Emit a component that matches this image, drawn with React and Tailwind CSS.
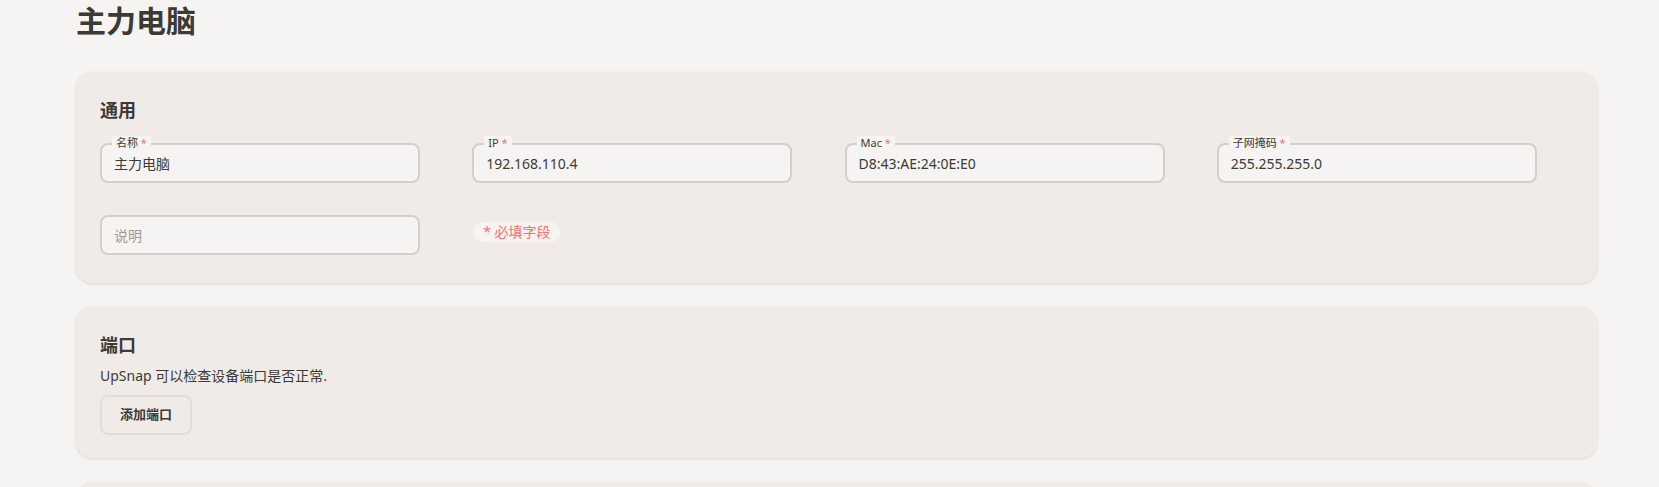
import { useState } from "react";

const FONT = "font-['Noto_Sans','Noto_Sans_CJK_SC',sans-serif]";

const Field = ({ label, value, required, placeholder }) => (
    <div className="relative w-[320px]">
        {label && (
            <span className="absolute left-[12px] -top-[7px] px-[4px] bg-[#f5f4f2] text-[11px] leading-[13px] text-[#3d3934]">
                {label}
                {required && <span className="text-[#f87171]"> *</span>}
            </span>
        )}
        <input
            defaultValue={value}
            placeholder={placeholder}
            className="w-full h-[40px] rounded-lg border-2 border-[#d3d0cb] bg-[#f5f4f2] pl-3 text-[14px] text-[#3d3934] placeholder:text-[#9d9994] outline-none"
        />
    </div>
);

export default function App() {
    const [ports] = useState([]);

    return (
        <div className={`min-h-screen bg-[#f5f4f2] ${FONT} text-[#3d3934]`}>
            <div className="pl-[76px] w-[1597px] pt-[3px]">
                <h1 className="text-[30px] leading-[36px] font-bold text-[#3d3934]">主力电脑</h1>

                {/* --- GENERAL --- */}
                <section className="mt-[33px] bg-[#f0ebe7] rounded-2xl shadow-[0_1px_3px_rgba(0,0,0,0.12)] px-6 pt-6 pb-[28px]">
                    <h2 className="text-[18px] leading-[28px] font-bold">通用</h2>
                    <div className="grid grid-cols-4 gap-x-4 mt-[19px]">
                        <Field label="名称" value="主力电脑" required />
                        <Field label="IP" value="192.168.110.4" required />
                        <Field label="Mac" value="D8:43:AE:24:0E:E0" required />
                        <Field label="子网掩码" value="255.255.255.0" required />
                    </div>
                    <div className="grid grid-cols-4 gap-x-4 mt-[32px]">
                        <Field placeholder="说明" />
                        <div className="pt-[4px] pl-[1px]">
                            <span className="inline-flex items-center h-[20px] px-[10px] rounded-full bg-[#f6f3f1] text-[14px] text-[#f87171]">
                                * 必填字段
                            </span>
                        </div>
                    </div>
                </section>

                {/* --- PORTS --- */}
                <section className="mt-[24px] bg-[#f0ebe7] rounded-2xl shadow-[0_1px_3px_rgba(0,0,0,0.12)] px-6 pt-6 pb-[23px]">
                    <h2 className="text-[18px] leading-[28px] font-bold">端口</h2>
                    <p className="text-[14px] leading-[20px] mt-[7px]">UpSnap 可以检查设备端口是否正常.</p>
                    {ports.length === 0 && (
                        <button className="mt-[9px] h-[40px] w-[92px] rounded-lg border-2 border-[#e2ddd8] bg-[#f0ebe7] text-[13px] font-bold text-[#3d3934]">
                            添加端口
                        </button>
                    )}
                </section>

                <section className="mt-[24px] h-[120px] bg-[#f0ebe7] rounded-2xl shadow-[0_1px_3px_rgba(0,0,0,0.12)]" />
            </div>
        </div>
    );
}
